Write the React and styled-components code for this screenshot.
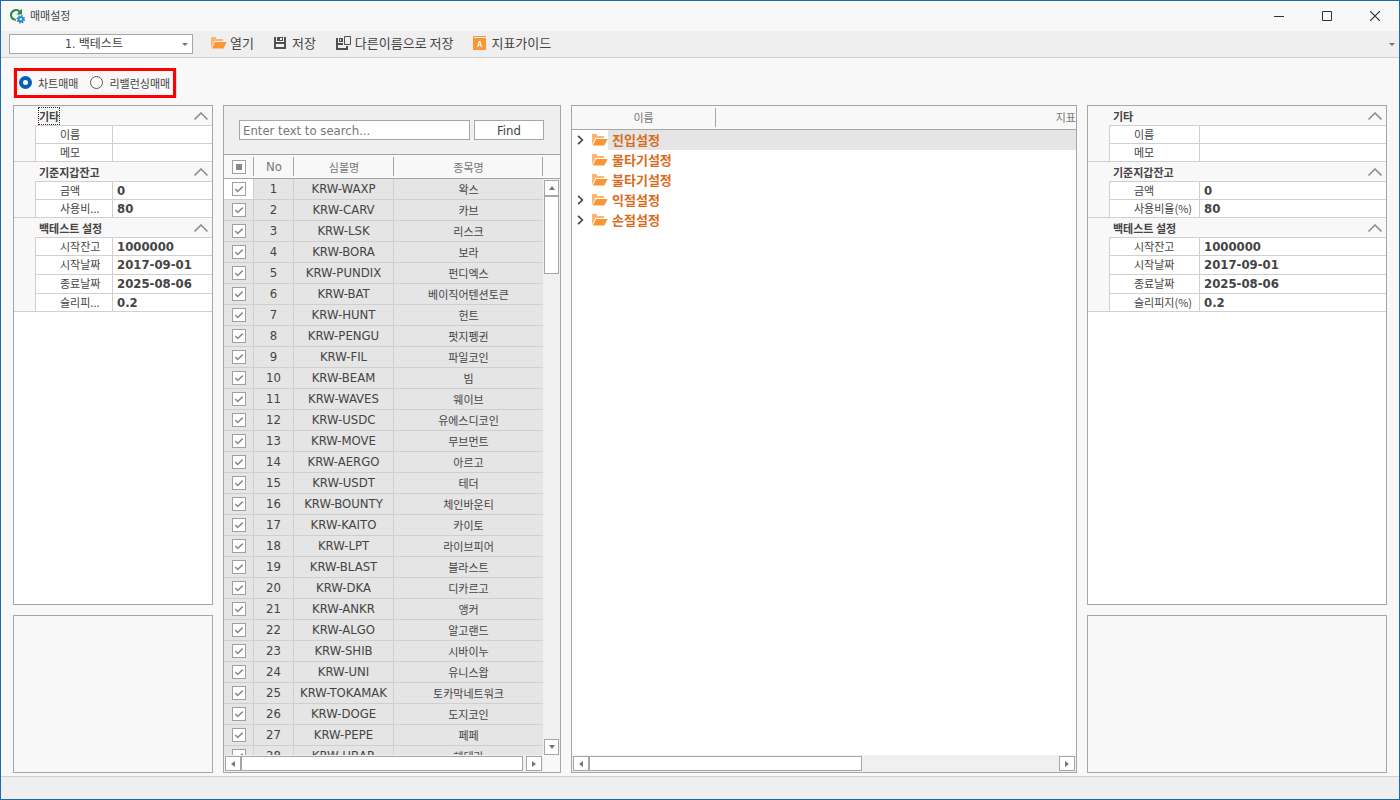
import styled, { createGlobalStyle } from 'styled-components';

const GlobalStyle = createGlobalStyle`
  * {
    box-sizing: border-box;
  }
  body {
    margin: 0;
    font-family: "DejaVu Sans Condensed", "Noto Sans CJK KR", sans-serif;
    font-size: 13px;
    color: #444;
  }
  input, button, select {
    font-family: inherit;
    color: inherit;
    margin: 0;
  }
`;

const korean = '"Noto Sans CJK KR", sans-serif';

const Window = styled.div`
  height: 100vh;
  display: flex;
  flex-direction: column;
  border: 1px solid #1a6ab4;
  background-color: #f8f8f8;
`;

const TitleBar = styled.header`
  height: 30px;
  display: flex;
  align-items: center;
  padding-left: 8px;
  gap: 5px;
`;

const Title = styled.h1`
  margin: 0;
  flex: 1;
  font-family: ${korean};
  font-size: 11px;
  line-height: 16px;
  padding-bottom: 2px;
  font-weight: 400;
`;

const WindowButtons = styled.div`
  display: flex;
`;

const WindowButton = styled.button`
  width: 48px;
  height: 30px;
  padding: 0;
  border: none;
  background: none;
  display: flex;
  align-items: center;
  justify-content: center;
`;

const Toolbar = styled.nav`
  height: 27px;
  display: flex;
  align-items: center;
  padding: 0 4px 0 8px;
  background-color: #efefef;
  border-bottom: 1px solid #d0d0d0;
`;

const SelectBox = styled.div`
  position: relative;
  width: 184px;
  margin-right: 18px;
`;

const Preset = styled.select`
  display: block;
  appearance: none;
  width: 100%;
  height: 20px;
  padding: 0 14px 0 0;
  border: 1px solid #a6a6a6;
  border-radius: 0;
  background-color: #fff;
  font-size: 12px;
  text-align: center;
  text-align-last: center;
`;

const SelectCaret = styled.span`
  position: absolute;
  right: 5px;
  top: 4px;
  pointer-events: none;
  display: flex;
  height: 12px;
  align-items: center;
`;

const ToolButton = styled.button`
  display: flex;
  align-items: center;
  gap: 3px;
  margin-right: 20px;
  padding: 0 0 2px;
  border: none;
  background: none;
  font-family: ${korean};
  font-size: 13px;
  line-height: 20px;
`;

const OverflowButton = styled.button`
  margin-left: auto;
  padding: 0;
  border: none;
  background: none;
  display: flex;
`;

const Content = styled.main`
  flex: 1;
  min-height: 0;
  display: flex;
  flex-direction: column;
  align-items: flex-start;
  gap: 7px;
  padding: 10px 12px 3px;
`;

const ModeFrame = styled.div`
  border-left: 1px solid #dcdcdc;
  border-right: 1px solid #dcdcdc;
`;

const ModeGroup = styled.fieldset`
  margin: 0;
  height: 30px;
  min-width: 0;
  display: flex;
  align-items: center;
  gap: 12px;
  padding: 0 3px 1px 2px;
  border: 3px solid #f00;
`;

const ModeLabel = styled.label`
  display: flex;
  align-items: center;
  gap: 6px;
  font-family: ${korean};
  font-size: 11px;
`;

const Radio = styled.input`
  appearance: none;
  width: 13px;
  height: 13px;
  border: 1px solid #555;
  border-radius: 50%;
  background-color: #fff;
  &:checked {
    border: 4px solid #0560b6;
  }
`;

const Columns = styled.div`
  flex: 1;
  min-height: 0;
  width: 100%;
  display: grid;
  grid-template-columns: 200px 338px minmax(0, 1fr) 300px;
  grid-template-rows: minmax(0, 1fr);
  gap: 10px;
`;

const Side = styled.div`
  display: grid;
  grid-template-rows: minmax(0, 1fr) 158px;
  gap: 10px;
`;

const Panel = styled.section`
  min-height: 0;
  display: flex;
  flex-direction: column;
  overflow: hidden;
  border: 1px solid #a6a6a6;
  background-color: ${(props) => props.$bg || '#fff'};
`;

const PropTable = styled.table`
  width: 100%;
  table-layout: fixed;
  border-collapse: separate;
  border-spacing: 0;
`;

const GroupHead = styled.th`
  height: 19px;
  padding: 0 4px 0 25px;
  background-color: #f8f8f8;
  text-align: left;
  font-family: ${korean};
  font-size: 11px;
  font-weight: 700;
  line-height: 16px;
`;

const GroupRow = styled.div`
  display: flex;
  align-items: center;
  justify-content: space-between;
`;

const GroupTitle = styled.span`
  outline: ${(props) => (props.$focused ? '1px dotted #333' : 'none')};
`;

const CollapseButton = styled.button`
  padding: 0;
  border: none;
  background: none;
  display: flex;
`;

const IndentCell = styled.td`
  padding: 0;
  background-color: #f8f8f8;
  border-right: 1px solid #d0d0d0;
  border-bottom: 1px solid #d0d0d0;
`;

const NameCell = styled.th`
  height: ${(props) => (props.$tall ? 19 : 18)}px;
  padding: 0 0 2px 24px;
  border-right: 1px solid #d0d0d0;
  border-bottom: 1px solid #d0d0d0;
  border-top: ${(props) => (props.$first ? '1px solid #d0d0d0' : 'none')};
  text-align: left;
  white-space: nowrap;
  overflow: hidden;
  font-family: ${korean};
  font-size: 11px;
  font-weight: 400;
  line-height: 14px;
`;

const ValueCell = styled.td`
  padding: 0 4px;
  border-bottom: 1px solid #d0d0d0;
  border-top: ${(props) => (props.$first ? '1px solid #d0d0d0' : 'none')};
  font-size: 13px;
  font-weight: 700;
  line-height: 16px;
`;

const SearchBar = styled.form`
  display: flex;
  gap: 4px;
  padding: 14px 16px 14px 15px;
  background-color: #efefef;
  border-bottom: 1px solid #a6a6a6;
`;

const SearchInput = styled.input`
  flex: 1;
  min-width: 0;
  height: 20px;
  padding: 0 3px;
  border: 1px solid #a6a6a6;
  outline: none;
  background-color: #fff;
  font-size: 13px;
  &::placeholder {
    color: #777;
  }
`;

const FindButton = styled.button`
  width: 70px;
  height: 20px;
  padding: 0;
  border: 1px solid #a6a6a6;
  background-color: #fff;
  font-size: 13px;
`;

const SymbolArea = styled.div`
  flex: 1;
  min-height: 0;
  display: grid;
  grid-template-columns: minmax(0, 1fr) 17px;
  grid-template-rows: 24px minmax(0, 1fr) 17px;
`;

const HeadFill = styled.div`
  background-color: #f8f8f8;
  border-bottom: 1px solid #a6a6a6;
`;

const TableClip = styled.div`
  grid-row: 1 / 3;
  min-height: 0;
  overflow: hidden;
`;

const SymbolTable = styled.table`
  width: 100%;
  table-layout: fixed;
  border-collapse: separate;
  border-spacing: 0;
`;

const HeadCell = styled.th`
  height: 24px;
  padding: 0;
  background: linear-gradient(#a6a6a6, #a6a6a6) no-repeat right 2px / 1px 19px #f8f8f8;
  background-position: right 2px;
  border-bottom: 1px solid #a6a6a6;
  color: #777;
  font-family: ${(props) => (props.$korean ? korean : 'inherit')};
  font-size: ${(props) => (props.$korean ? 11 : 13)}px;
  font-weight: 400;
  line-height: 16px;
`;

const Cell = styled.td`
  height: 21px;
  padding: 0;
  background-color: ${(props) => (props.$active ? '#fff' : '#e5e5e5')};
  border-right: 1px solid #cfcfcf;
  border-bottom: 1px solid #cfcfcf;
  text-align: center;
  white-space: nowrap;
  font-family: ${(props) => (props.$korean ? korean : 'inherit')};
  font-size: ${(props) => (props.$korean ? 11 : 13)}px;
  line-height: 16px;
  &:last-child {
    border-right: none;
  }
`;

const CheckBox = styled.label`
  display: grid;
  justify-content: center;
  place-items: center;
  svg, input {
    grid-area: 1 / 1;
  }
  svg {
    pointer-events: none;
  }
`;

const CheckInput = styled.input`
  appearance: none;
  width: 14px;
  height: 14px;
  border: 1px solid #a0a0a0;
  background-color: #fff;
`;

const ScrollBar = styled.div`
  display: flex;
  flex-direction: ${(props) => (props.$vertical ? 'column' : 'row')};
  padding: ${(props) => (props.$vertical ? '1px 1px 0' : '1px')};
  background-color: #f0f0f0;
`;

const ScrollButton = styled.button`
  flex: none;
  width: ${(props) => (props.$vertical ? 15 : 16)}px;
  height: ${(props) => (props.$vertical ? 16 : 15)}px;
  padding: 0;
  border: 1px solid #a6a6a6;
  background-color: #fff;
  display: flex;
  align-items: center;
  justify-content: center;
`;

const Track = styled.div`
  flex: 1;
  min-width: 0;
  min-height: 0;
`;

const Thumb = styled.div`
  width: ${(props) => (props.$vertical ? '15px' : props.$size)};
  height: ${(props) => (props.$vertical ? props.$size : '15px')};
  border: 1px solid #a6a6a6;
  background-color: #fff;
`;

const TreeHead = styled.div`
  height: 24px;
  display: flex;
  padding: 2px 0;
  border-bottom: 1px solid #a6a6a6;
  background-color: #f8f8f8;
  color: #777;
  font-family: ${korean};
  font-size: 11px;
  line-height: 18px;
`;

const TreeHeadName = styled.span`
  width: 144px;
  border-right: 1px solid #a6a6a6;
  text-align: center;
`;

const TreeHeadMetric = styled.span`
  flex: 1;
  text-align: right;
`;

const Tree = styled.ul`
  flex: 1;
  min-height: 0;
  margin: 0;
  padding: 0;
  list-style: none;
`;

const TreeItem = styled.li`
  display: flex;
  align-items: center;
  height: 20px;
  padding-left: 5px;
`;

const TreeToggle = styled.span`
  width: 15px;
  display: flex;
`;

const TreeLabel = styled.span`
  flex: 1;
  padding-left: 4px;
  background-color: ${(props) => (props.$selected ? '#e5e5e5' : 'transparent')};
  color: #d86c1c;
  font-family: ${korean};
  font-size: 13px;
  font-weight: 700;
  line-height: 20px;
`;

const StatusBar = styled.footer`
  height: 23px;
  border-top: 1px solid #d0d0d0;
  background-color: #efefef;
`;

const AppLogo = () => (
  <svg width="16" height="16" viewBox="0 0 16 16">
    <path d="M10.6 3.6A5 5 0 1 0 6.8 12" fill="none" stroke="#2b8a46" strokeWidth="2.2" />
    <path d="M13 0.8v5.6H7.4z" fill="#2b8a46" />
    <circle cx="11.8" cy="11.3" r="2.2" fill="none" stroke="#1f86cc" strokeWidth="1.8" />
    <circle cx="11.8" cy="11.3" r="3.5" fill="none" stroke="#1f86cc" strokeWidth="1.6" strokeDasharray="1.37 1.38" />
  </svg>
);

const FolderIcon = () => (
  <svg width="16" height="12" viewBox="0 0 16 12">
    <path d="M0 11V0h5v2h7v2H3.5L0 11z" fill="#fdb671" />
    <path d="M4 5h11.6L12.4 11.6H0.8z" fill="#fb9637" />
  </svg>
);

const SaveIcon = () => (
  <svg width="15" height="14" viewBox="0 0 15 14">
    <path fillRule="evenodd" d="M0 1h2v5h8V1h2v12H0zM2 8v3h8V8z" fill="#505050" />
    <path fillRule="evenodd" d="M3 1h6v4H3zM6 2v2h2V2z" fill="#505050" />
  </svg>
);

const SaveAsIcon = () => (
  <svg width="16" height="15" viewBox="0 0 16 15">
    <path d="M0 2h2v5h5v2H2v3h8v-2h2v4H0z" fill="#505050" />
    <path fillRule="evenodd" d="M3 2h4v4H3zM4 3v2h1V3z" fill="#505050" />
    <path d="M8.5 0.5h6v8h-6z" fill="none" stroke="#505050" />
  </svg>
);

const GuideIcon = () => (
  <svg width="15" height="14" viewBox="0 0 15 14">
    <path d="M0 0h13v1H1v1h12v12H0z" fill="#fb9637" />
    <path d="M4.6 11L6.2 5.5h0.8L8.4 11M5.3 9h2.6" fill="none" stroke="#fff" strokeWidth="1.1" />
  </svg>
);

const ChevronUp = () => (
  <svg width="14" height="8" viewBox="0 0 14 8">
    <path d="M0.5 7.5L7 1l6.5 6.5" fill="none" stroke="#888" strokeWidth="1.5" />
  </svg>
);

const ChevronRight = () => (
  <svg width="7" height="10" viewBox="0 0 7 10">
    <path d="M1 0.8L5.4 5 1 9.2" fill="none" stroke="#444" strokeWidth="1.6" />
  </svg>
);

const arrows = {
  up: 'M4 2l3 4H1z',
  down: 'M4 6L1 2h6z',
  left: 'M2 4l4-3v6z',
  right: 'M6 4L2 7V1z',
};

const Arrow = ({ direction }) => (
  <svg width="8" height="8" viewBox="0 0 8 8">
    <path d={arrows[direction]} fill="#777" />
  </svg>
);

const Caret = () => (
  <svg width="6" height="3" viewBox="0 0 6 3">
    <path d="M0 0h6L3 3z" fill="#777" />
  </svg>
);

const Check = ({ label, partial }) => (
  <CheckBox>
    <CheckInput type="checkbox" defaultChecked aria-label={label} />
    <svg width="10" height="10" viewBox="0 0 10 10">
      {partial
        ? <path d="M2 2h6v6H2z" fill="#888" />
        : <path d="M1.3 5l2.4 2.5L8.7 2.6" fill="none" stroke="#888" strokeWidth="1.5" />}
    </svg>
  </CheckBox>
);

const Scroll = ({ vertical, size }) => (
  <ScrollBar $vertical={vertical}>
    <ScrollButton type="button" $vertical={vertical} aria-label="scroll back">
      <Arrow direction={vertical ? 'up' : 'left'} />
    </ScrollButton>
    <Track>
      <Thumb $vertical={vertical} $size={size} />
    </Track>
    <ScrollButton type="button" $vertical={vertical} aria-label="scroll forward">
      <Arrow direction={vertical ? 'down' : 'right'} />
    </ScrollButton>
  </ScrollBar>
);

const makeGroups = (ratio, slippage) => [
  { title: '기타', rows: [['이름', ''], ['메모', '']] },
  { title: '기준지갑잔고', rows: [['금액', '0'], [ratio, '80']] },
  {
    title: '백테스트 설정',
    rows: [
      ['시작잔고', '1000000'],
      ['시작날짜', '2017-09-01', true],
      ['종료날짜', '2025-08-06', true],
      [slippage, '0.2'],
    ],
  },
];

const PropertyGrid = ({ groups, nameWidth, focused }) => (
  <PropTable>
    <colgroup>
      <col width="22" />
      <col width={nameWidth} />
      <col />
    </colgroup>
    {groups.map((group) => (
      <tbody key={group.title}>
        <tr>
          <GroupHead colSpan={3}>
            <GroupRow>
              <GroupTitle $focused={focused === group.title}>{group.title}</GroupTitle>
              <CollapseButton type="button" aria-label={group.title}><ChevronUp /></CollapseButton>
            </GroupRow>
          </GroupHead>
        </tr>
        {group.rows.map(([name, value, tall], index) => (
          <tr key={name}>
            {index === 0 && <IndentCell rowSpan={group.rows.length} />}
            <NameCell scope="row" $tall={tall || index === 0} $first={index === 0}>{name}</NameCell>
            <ValueCell $first={index === 0}>{value}</ValueCell>
          </tr>
        ))}
      </tbody>
    ))}
  </PropTable>
);

const symbols = [
  ['WAXP', '왁스'],
  ['CARV', '카브'],
  ['LSK', '리스크'],
  ['BORA', '보라'],
  ['PUNDIX', '펀디엑스'],
  ['BAT', '베이직어텐션토큰'],
  ['HUNT', '헌트'],
  ['PENGU', '펏지펭귄'],
  ['FIL', '파일코인'],
  ['BEAM', '빔'],
  ['WAVES', '웨이브'],
  ['USDC', '유에스디코인'],
  ['MOVE', '무브먼트'],
  ['AERGO', '아르고'],
  ['USDT', '테더'],
  ['BOUNTY', '체인바운티'],
  ['KAITO', '카이토'],
  ['LPT', '라이브피어'],
  ['BLAST', '블라스트'],
  ['DKA', '디카르고'],
  ['ANKR', '앵커'],
  ['ALGO', '알고랜드'],
  ['SHIB', '시바이누'],
  ['UNI', '유니스왑'],
  ['TOKAMAK', '토카막네트워크'],
  ['DOGE', '도지코인'],
  ['PEPE', '페페'],
  ['HBAR', '헤데라'],
];

const SymbolPanel = () => (
  <Panel $bg="#f8f8f8">
    <SearchBar onSubmit={(e) => e.preventDefault()}>
      <SearchInput type="text" placeholder="Enter text to search..." aria-label="Find" />
      <FindButton type="submit">Find</FindButton>
    </SearchBar>
    <SymbolArea>
      <TableClip>
        <SymbolTable>
          <colgroup>
            <col width="30" />
            <col width="40" />
            <col width="100" />
            <col />
          </colgroup>
          <thead>
            <tr>
              <HeadCell><Check label="전체" partial /></HeadCell>
              <HeadCell>No</HeadCell>
              <HeadCell $korean>심볼명</HeadCell>
              <HeadCell $korean>종목명</HeadCell>
            </tr>
          </thead>
          <tbody>
            {symbols.map(([code, name], index) => (
              <tr key={code}>
                <Cell $active={index === 0}><Check label={name} /></Cell>
                <Cell>{index + 1}</Cell>
                <Cell>KRW-{code}</Cell>
                <Cell $korean>{name}</Cell>
              </tr>
            ))}
          </tbody>
        </SymbolTable>
      </TableClip>
      <HeadFill />
      <Scroll vertical size="78px" />
      <Scroll size="99%" />
    </SymbolArea>
  </Panel>
);

const treeItems = [
  { name: '진입설정', expandable: true, selected: true },
  { name: '물타기설정' },
  { name: '불타기설정' },
  { name: '익절설정', expandable: true },
  { name: '손절설정', expandable: true },
];

const TreePanel = () => (
  <Panel>
    <TreeHead>
      <TreeHeadName>이름</TreeHeadName>
      <TreeHeadMetric>지표</TreeHeadMetric>
    </TreeHead>
    <Tree>
      {treeItems.map(({ name, expandable, selected }) => (
        <TreeItem key={name}>
          <TreeToggle>{expandable && <ChevronRight />}</TreeToggle>
          <FolderIcon />
          <TreeLabel $selected={selected}>{name}</TreeLabel>
        </TreeItem>
      ))}
    </Tree>
    <Scroll size="58%" />
  </Panel>
);

const App = () => {
  return (
    <>
      <GlobalStyle />
      <Window>
        <TitleBar>
          <AppLogo />
          <Title>매매설정</Title>
          <WindowButtons>
            <WindowButton type="button" aria-label="minimize">
              <svg width="10" height="10"><path d="M0 5.5h10" stroke="#333" /></svg>
            </WindowButton>
            <WindowButton type="button" aria-label="maximize">
              <svg width="10" height="10"><path d="M0.5 0.5h9v9h-9z" fill="none" stroke="#333" /></svg>
            </WindowButton>
            <WindowButton type="button" aria-label="close">
              <svg width="10" height="10"><path d="M0 0l10 10M10 0L0 10" stroke="#333" strokeWidth="1.2" /></svg>
            </WindowButton>
          </WindowButtons>
        </TitleBar>
        <Toolbar>
          <SelectBox>
            <Preset aria-label="설정" defaultValue="1">
              <option value="1">1. 백테스트</option>
            </Preset>
            <SelectCaret><Caret /></SelectCaret>
          </SelectBox>
          <ToolButton type="button"><FolderIcon />열기</ToolButton>
          <ToolButton type="button"><SaveIcon />저장</ToolButton>
          <ToolButton type="button"><SaveAsIcon />다른이름으로 저장</ToolButton>
          <ToolButton type="button"><GuideIcon />지표가이드</ToolButton>
          <OverflowButton type="button" aria-label="more"><Caret /></OverflowButton>
        </Toolbar>
        <Content>
          <ModeFrame>
            <ModeGroup>
              <ModeLabel><Radio type="radio" name="mode" defaultChecked />차트매매</ModeLabel>
              <ModeLabel><Radio type="radio" name="mode" />리밸런싱매매</ModeLabel>
            </ModeGroup>
          </ModeFrame>
          <Columns>
            <Side>
              <Panel>
                <PropertyGrid groups={makeGroups('사용비...', '슬리피...')} nameWidth={77} focused="기타" />
              </Panel>
              <Panel $bg="#f8f8f8" />
            </Side>
            <SymbolPanel />
            <TreePanel />
            <Side>
              <Panel>
                <PropertyGrid groups={makeGroups('사용비율(%)', '슬리피지(%)')} nameWidth={90} />
              </Panel>
              <Panel $bg="#f8f8f8" />
            </Side>
          </Columns>
        </Content>
        <StatusBar />
      </Window>
    </>
  );
};

export default App;
